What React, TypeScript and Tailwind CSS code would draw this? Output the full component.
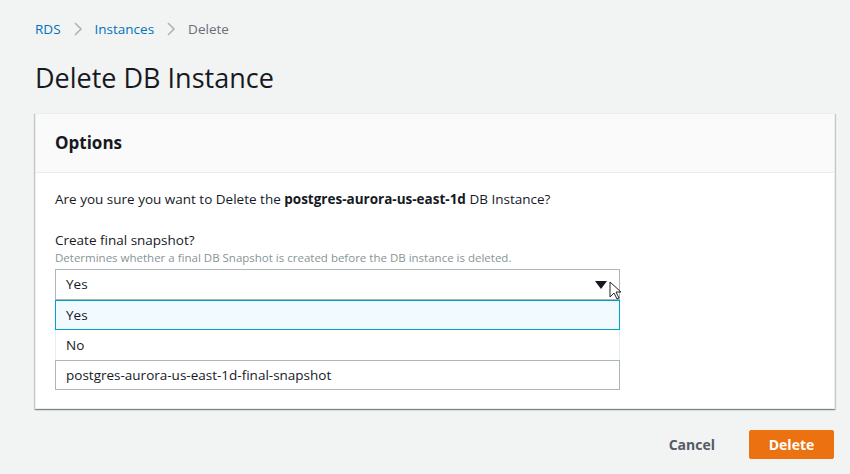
import React from 'react';

function Chevron() {
  return (
    <svg width="10" height="16" viewBox="0 0 10 16" className="mx-[12px]">
      <path d="M2 2l6 6-6 6" fill="none" stroke="#aab7b8" strokeWidth="1.6" />
    </svg>
  );
}

function Cursor() {
  return (
    <svg width="14" height="20" viewBox="0 0 14 20" className="absolute left-[609px] top-[281px]">
      <path d="M1 1v15l4-4 3 6 2-1-3-6h5z" fill="#fff" stroke="#222" strokeWidth="1" strokeLinejoin="round" />
    </svg>
  );
}

export default function App() {
  return (
    <div className="relative w-[850px] h-[474px] bg-[#f2f3f3] text-[#16191f] font-['Open_Sans','Liberation_Sans',sans-serif] overflow-hidden">
      {/* Breadcrumb */}
      <div className="flex items-center pl-[35px] pt-[19px] text-[13.5px] leading-[20px]">
        <span className="text-[#0073bb]">RDS</span>
        <Chevron />
        <span className="text-[#0073bb]">Instances</span>
        <Chevron />
        <span className="text-[#687078]">Delete</span>
      </div>

      <h1 className="pl-[35px] mt-[19px] text-[27px] leading-[40px]">Delete DB Instance</h1>

      {/* Options card */}
      <div className="ml-[35px] mr-[15px] mt-[15px] bg-white border border-[#eaeded] shadow-[0_1px_1px_0_rgba(0,28,36,0.3),1px_1px_1px_0_rgba(0,28,36,0.15),-1px_1px_1px_0_rgba(0,28,36,0.15)]">
        <div className="h-[59px] flex items-center px-[19px] bg-[#fafafa] border-b border-[#eaeded]">
          <h2 className="text-[17px] font-bold">Options</h2>
        </div>
        <div className="px-[19px] pt-[15px] pb-[18px] text-[13.5px]">
          <p className="leading-[22px]">
            Are you sure you want to Delete the <b>postgres-aurora-us-east-1d</b> DB Instance?
          </p>

          <div className="mt-[20px] leading-[20px]">Create final snapshot?</div>
          <div className="text-[11.5px] leading-[16px] text-[#879596]">
            Determines whether a final DB Snapshot is created before the DB instance is deleted.
          </div>

          <div className="w-[565px] mt-[3px]">
            <div className="h-[31px] flex items-center justify-between px-[10px] border border-[#aab7b8] bg-white">
              <span>Yes</span>
              <svg width="12" height="8" viewBox="0 0 12 8" className="mr-[2px]">
                <path d="M0 0h12L6 8z" fill="#16191f" />
              </svg>
            </div>
            <div className="h-[30px] flex items-center px-[10px] border border-[#00a1c9] bg-[#f1faff]">Yes</div>
            <div className="h-[30px] flex items-center px-[10px] border-x border-[#eaeded] bg-white">No</div>
            <div className="h-[30px] flex items-center px-[10px] border border-[#aab7b8] bg-white">
              postgres-aurora-us-east-1d-final-snapshot
            </div>
          </div>
        </div>
      </div>

      {/* Actions */}
      <div className="flex justify-end items-center gap-[34px] pr-[16px] mt-[21px] text-[14px] font-bold">
        <span className="text-[#545b64]">Cancel</span>
        <button className="w-[85px] h-[29px] bg-[#ec7211] text-white rounded-[2px] border border-[#ec7211]">Delete</button>
      </div>

      <Cursor />
    </div>
  );
}
